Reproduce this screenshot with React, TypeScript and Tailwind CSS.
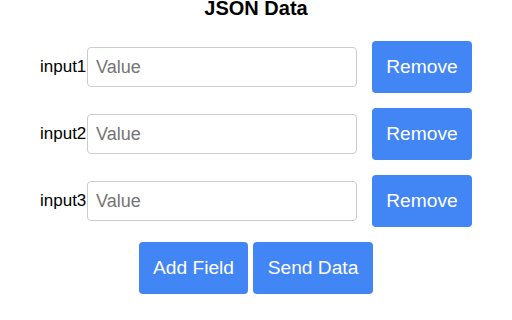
import React, { useState } from 'react';

type Field = { key: string; value: string };

const App: React.FC = () => {
  const [fields, setFields] = useState<Field[]>([
    { key: 'input1', value: '' },
    { key: 'input2', value: '' },
    { key: 'input3', value: '' },
  ]);

  const removeField = (i: number) => setFields(fields.filter((_, idx) => idx !== i));
  const addField = () =>
    setFields([...fields, { key: `input${fields.length + 1}`, value: '' }]);

  return (
    <div className="w-[512px] h-[320px] overflow-hidden bg-white font-['Liberation_Sans',Arial,sans-serif] text-black flex flex-col items-center">
      {/* 标题 */}
      <h2 className="mt-[-3px] text-[20px] leading-[23px] font-bold">JSON Data</h2>

      <div className="mt-[21px] flex flex-col gap-[15px]">
        {fields.map((f, i) => (
          <div key={i} className="flex items-center">
            <label className="text-[17px] leading-[20px] w-[46px]">{f.key}</label>
            <input
              value={f.value}
              onChange={e => {
                const next = [...fields];
                next[i] = { ...f, value: e.target.value };
                setFields(next);
              }}
              placeholder="Value"
              className="ml-[1px] w-[270px] h-[40px] px-[8px] border border-[#cccccc] rounded-[4px] text-[18px] placeholder:text-[#757575] outline-none"
            />
            <button
              onClick={() => removeField(i)}
              className="ml-[15px] w-[100px] h-[52px] rounded-[4px] bg-[#4285f4] text-white text-[19.2px] leading-[22px]"
            >
              Remove
            </button>
          </div>
        ))}
      </div>

      {/* 底部按钮 */}
      <div className="mt-[15px] flex gap-[5px]">
        <button
          onClick={addField}
          className="w-[109px] h-[52px] rounded-[4px] bg-[#4285f4] text-white text-[19.2px] leading-[22px]"
        >
          Add Field
        </button>
        <button className="w-[120px] h-[52px] rounded-[4px] bg-[#4285f4] text-white text-[19.2px] leading-[22px]">
          Send Data
        </button>
      </div>
    </div>
  );
};

export default App;
